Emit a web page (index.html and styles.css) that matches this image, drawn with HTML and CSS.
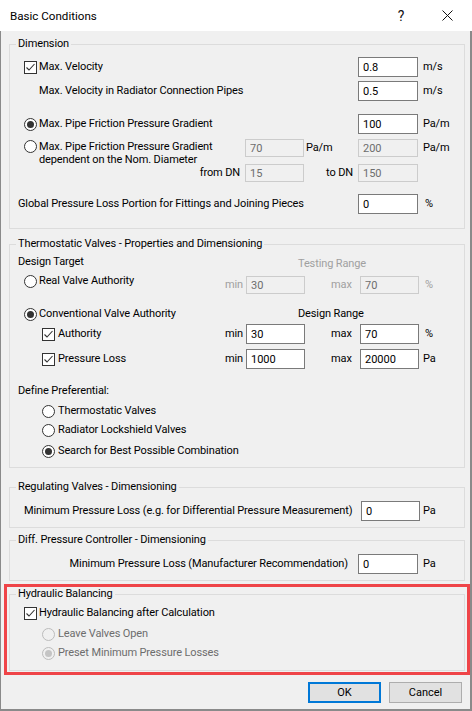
FILE: index.html
```html
<!DOCTYPE html>
<html>
<head>
<meta charset="utf-8">
<title>Basic Conditions</title>
<link rel="stylesheet" href="styles.css">
</head>
<body>
<div class="win">
  <div class="titlebar">
    <span class="title">Basic Conditions</span>
    <span class="tbtn help">?</span>
    <span class="tbtn close"><svg width="11" height="11" viewBox="0 0 11 11"><path d="M0.5 0.5 L10.5 10.5 M10.5 0.5 L0.5 10.5" stroke="#111" stroke-width="1" fill="none"/></svg></span>
  </div>
  <div class="content">
    <fieldset class="group g-dim">
      <legend>Dimension</legend>
      <div class="row d1">
        <span class="chk"><svg width="11" height="11" viewBox="0 0 11 11"><path d="M1.5 5.5 L4 8 L9.5 2" stroke="#333" stroke-width="1.1" fill="none"/></svg></span>
        <span class="lab">Max. Velocity</span>
        <input class="inp w60" type="text" value="0.8">
        <span class="unit u46">m/s</span>
      </div>
      <div class="row d2">
        <span class="lab">Max. Velocity in Radiator Connection Pipes</span>
        <input class="inp w60" type="text" value="0.5">
        <span class="unit u46">m/s</span>
      </div>
      <div class="row d3">
        <span class="rad on"></span>
        <span class="lab">Max. Pipe Friction Pressure Gradient</span>
        <input class="inp w60" type="text" value="100">
        <span class="unit u46">Pa/m</span>
      </div>
      <div class="row d4">
        <span class="rad"></span>
        <span class="lab two">Max. Pipe Friction Pressure Gradient<br>dependent on the Nom. Diameter</span>
        <input class="inp dis w59 h18" type="text" value="70" disabled>
        <span class="mid">Pa/m</span>
        <input class="inp dis w60 h18" type="text" value="200" disabled>
        <span class="unit u46 t18">Pa/m</span>
      </div>
      <div class="row d5">
        <span class="lab right">from DN</span>
        <input class="inp dis w59 h18" type="text" value="15" disabled>
        <span class="mid right">to DN</span>
        <input class="inp dis w60 h18" type="text" value="150" disabled>
        <span class="unit u46"></span>
      </div>
      <div class="row d6">
        <span class="lab">Global Pressure Loss Portion for Fittings and Joining Pieces</span>
        <input class="inp w60" type="text" value="0">
        <span class="unit u46 pct">%</span>
      </div>
    </fieldset>

    <fieldset class="group g-therm">
      <legend>Thermostatic Valves - Properties and Dimensioning</legend>
      <div class="row t1">
        <span class="lab">Design Target</span>
        <span class="colhead gray">Testing Range</span>
      </div>
      <div class="row t2">
        <span class="lft"><span class="rad"></span><span class="lab">Real Valve Authority</span></span>
        <span class="mn gray">min</span>
        <input class="inp dis w59 h18" type="text" value="30" disabled>
        <span class="mx gray">max</span>
        <input class="inp dis w59 h18" type="text" value="70" disabled>
        <span class="unit u45 gray">%</span>
      </div>
      <div class="row t3">
        <span class="rad on"></span>
        <span class="lab">Conventional Valve Authority</span>
        <span class="colhead">Design Range</span>
      </div>
      <div class="row t4">
        <span class="chk"><svg width="11" height="11" viewBox="0 0 11 11"><path d="M1.5 5.5 L4 8 L9.5 2" stroke="#333" stroke-width="1.1" fill="none"/></svg></span>
        <span class="lab">Authority</span>
        <span class="mn">min</span>
        <input class="inp w59" type="text" value="30">
        <span class="mx">max</span>
        <input class="inp w59" type="text" value="70">
        <span class="unit u45">%</span>
      </div>
      <div class="row t5">
        <span class="chk"><svg width="11" height="11" viewBox="0 0 11 11"><path d="M1.5 5.5 L4 8 L9.5 2" stroke="#333" stroke-width="1.1" fill="none"/></svg></span>
        <span class="lab">Pressure Loss</span>
        <span class="mn">min</span>
        <input class="inp w59" type="text" value="1000">
        <span class="mx">max</span>
        <input class="inp w59" type="text" value="20000">
        <span class="unit u45 pa">Pa</span>
      </div>
      <div class="row t6"><span class="lab">Define Preferential:</span></div>
      <div class="row t7"><span class="rad"></span><span class="lab">Thermostatic Valves</span></div>
      <div class="row t8"><span class="rad"></span><span class="lab">Radiator Lockshield Valves</span></div>
      <div class="row t9"><span class="rad on"></span><span class="lab">Search for Best Possible Combination</span></div>
    </fieldset>

    <fieldset class="group g-reg">
      <legend>Regulating Valves - Dimensioning</legend>
      <div class="row r1">
        <span class="lab">Minimum Pressure Loss (e.g. for Differential Pressure Measurement)</span>
        <input class="inp w59" type="text" value="0">
        <span class="unit u44">Pa</span>
      </div>
    </fieldset>

    <fieldset class="group g-diff">
      <legend>Diff. Pressure Controller - Dimensioning</legend>
      <div class="row p1">
        <span class="lab right">Minimum Pressure Loss (Manufacturer Recommendation)</span>
        <input class="inp w60" type="text" value="0">
        <span class="unit u46">Pa</span>
      </div>
    </fieldset>

    <div class="highlight">
      <fieldset class="group g-hyd">
        <legend>Hydraulic Balancing</legend>
        <div class="row h1">
          <span class="chk"><svg width="11" height="11" viewBox="0 0 11 11"><path d="M1.5 5.5 L4 8 L9.5 2" stroke="#333" stroke-width="1.1" fill="none"/></svg></span>
          <span class="lab">Hydraulic Balancing after Calculation</span>
        </div>
        <div class="row h2"><span class="rad dis"></span><span class="lab dtext">Leave Valves Open</span></div>
        <div class="row h3"><span class="rad dis on"></span><span class="lab dtext">Preset Minimum Pressure Losses</span></div>
      </fieldset>
    </div>

    <div class="buttons">
      <button class="btn default" type="button">OK</button>
      <button class="btn" type="button">Cancel</button>
    </div>
  </div>
</div>
</body>
</html>
```
FILE: styles.css
```css
* { box-sizing: border-box; }
html, body { margin: 0; padding: 0; }
body {
  width: 472px;
  height: 711px;
  overflow: hidden;
  background: #f0f0f0;
  font-family: Roboto, "Noto Sans", "Liberation Sans", sans-serif;
  font-size: 11px;
  line-height: 14px;
  letter-spacing: -0.12px;
  color: #000;
}
.win { width: 472px; height: 711px; }

.titlebar {
  height: 31px;
  background: #fff;
  display: flex;
  align-items: center;
  padding-left: 10px;
  padding-right: 2px;
}
.title { flex: 1; font-size: 11.6px; letter-spacing: 0; }
.tbtn {
  width: 46px;
  height: 31px;
  display: flex;
  align-items: center;
  justify-content: center;
}
.help { font-size: 14px; color: #111; }
.close svg { display: block; }

.content {
  height: 680px;
  border-left: 1px solid #8a8a8a;
  border-right: 2px solid #8a8a8a;
  border-bottom: 2px solid #8a8a8a;
  padding: 6px 0 0 8px;
}

.group {
  margin: 0;
  padding: 0;
  border: 1px solid #dcdcdc;
  width: 456px;
  min-width: 0;
}
.group legend {
  margin-left: 6px;
  padding: 0 2px;
  line-height: 14px;
}
.g-therm { margin-top: 8px; }
.g-reg { margin-top: 12px; }
.g-diff { margin-top: 5px; }

.highlight {
  margin-top: 3px;
  margin-left: -5px;
  width: 466px;
  border: 3px solid #ef4448;
  padding: 0 0 1px 2px;
}

.row { display: flex; align-items: center; }
.lab { flex: 1; white-space: nowrap; }
.lab.right, .mid.right { text-align: right; }
.gray { color: #a0a0a0; }
.dtext { color: #6d6d6d; }

.chk {
  width: 13px;
  height: 13px;
  flex: none;
  border: 1px solid #333;
  background: #fff;
  margin-right: 2px;
}
.chk svg { display: block; }

.rad {
  width: 13px;
  height: 13px;
  flex: none;
  border: 1px solid #333;
  border-radius: 50%;
  background: #fff;
  margin-right: 2px;
  display: flex;
  align-items: center;
  justify-content: center;
}
.rad.on::after {
  content: "";
  width: 7px;
  height: 7px;
  border-radius: 50%;
  background: #333;
}
.rad.dis { border-color: #bcbcbc; background: #f0f0f0; }
.rad.dis.on::after { background: #c4c4c4; }

.inp {
  flex: none;
  height: 20px;
  margin: 0;
  padding: 0 0 0 4px;
  border: 1px solid #7a7a7a;
  background: #fff;
  font: inherit;
  color: #000;
  outline: none;
  -webkit-appearance: none;
  appearance: none;
}
.inp.dis, .inp:disabled {
  border-color: #cccccc;
  background: #f0f0f0;
  color: #6d6d6d;
  -webkit-text-fill-color: #6d6d6d;
  opacity: 1;
}
.w59 { width: 59px; }
.w60 { width: 60px; }
.h18 { height: 18px; }

.unit { flex: none; white-space: nowrap; }
.u46 { width: 46px; padding-left: 5px; }
.u45 { width: 45px; padding-left: 6px; }
.u44 { width: 44px; padding-left: 3px; }
.pct { padding-left: 7px; }
.pa { padding-left: 4px; }
.mid { flex: none; width: 54px; padding-left: 2px; }
.mid.right { padding-left: 0; padding-right: 5px; }

/* Dimension */
.d1 { margin-top: 6px; height: 20px; padding-left: 14px; }
.d2 { margin-top: 4px; height: 20px; padding-left: 29px; }
.d3 { margin-top: 13px; height: 20px; padding-left: 14px; }
.d4 { margin-top: 5px; height: 18px; padding-left: 14px; align-items: flex-start; }
.d4 .rad { margin-top: 1px; }
.d4 .lab.two { line-height: 13px; margin-top: 1px; }
.d4 .mid, .d4 .unit { line-height: 18px; }
.d5 { margin-top: 7px; height: 18px; }
.d5 .lab.right { padding-right: 5px; }
.d6 { margin-top: 12px; height: 20px; padding-left: 8px; }
.g-dim { padding-bottom: 14px; }

/* Thermostatic */
.t1 { margin-top: 4px; height: 14px; padding-left: 8px; align-items: flex-start; }
.colhead { flex: none; width: 166px; }
.t1 .colhead { margin-top: 2px; }
.t2 { margin-top: 5px; height: 20px; padding-left: 14px; align-items: flex-start; }
.lft { flex: 1; display: flex; align-items: center; height: 14px; }
.t2 .mn, .t2 .mx, .t2 .unit { line-height: 18px; margin-top: 2px; }
.t2 .inp { margin-top: 2px; }
.mn { flex: none; width: 21px; }
.mx { flex: none; width: 55px; padding-left: 26px; }
.t3 { margin-top: 13px; height: 14px; padding-left: 14px; }
.t4 { margin-top: 3px; height: 20px; padding-left: 32px; }
.t4 .chk, .t5 .chk { margin-right: 3px; }
.t5 { margin-top: 5px; height: 20px; padding-left: 32px; }
.t6 { margin-top: 15px; height: 14px; padding-left: 8px; }
.t7 { margin-top: 6px; height: 14px; padding-left: 32px; }
.t8 { margin-top: 5px; height: 14px; padding-left: 32px; }
.t9 { margin-top: 7px; height: 14px; padding-left: 32px; }
.t7 .rad, .t8 .rad, .t9 .rad { margin-right: 3px; }
.g-therm { padding-bottom: 9px; }

/* Regulating */
.r1 { margin-top: 7px; height: 20px; padding-left: 14px; }
.g-reg { padding-bottom: 6px; }

/* Diff pressure */
.p1 { margin-top: 7px; height: 20px; }
.p1 .lab.right { padding-right: 10px; }
.g-diff { padding-bottom: 6px; }

/* Hydraulic */
.h1 { margin-top: 5px; height: 14px; padding-left: 14px; }
.h2 { margin-top: 7px; height: 14px; padding-left: 32px; }
.h3 { margin-top: 5px; height: 14px; padding-left: 32px; }
.h2 .rad, .h3 .rad { margin-right: 3px; }
.g-hyd { padding-bottom: 10px; }

/* Buttons */
.buttons {
  margin-top: 7px;
  display: flex;
  justify-content: flex-end;
  gap: 8px;
  padding-right: 8px;
}
.btn {
  width: 73px;
  height: 21px;
  margin: 0;
  padding: 0;
  background: #e1e1e1;
  border: 1px solid #adadad;
  font: inherit;
  color: #000;
}
.btn.default { border: 2px solid #0078d7; }
```
